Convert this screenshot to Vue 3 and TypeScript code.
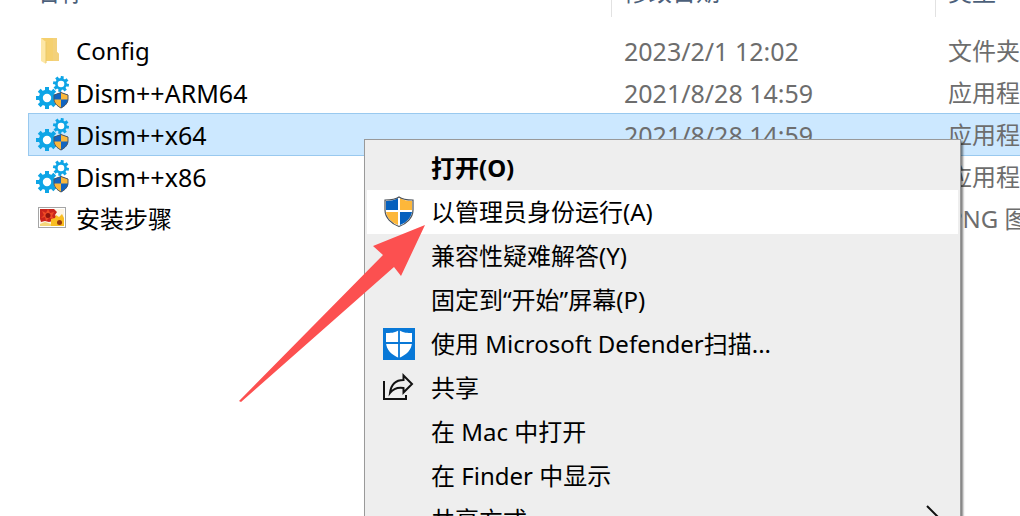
<script setup lang="ts">
type IconKind = 'folder' | 'gears' | 'image'
interface FileRow {
  name: string
  date: string
  type: string
  icon: IconKind
  selected?: boolean
}
interface MenuEntry {
  label: string
  icon?: 'uac' | 'defender' | 'share'
  bold?: boolean
  active?: boolean
  submenu?: boolean
}

const files: FileRow[] = [
  { name: 'Config', date: '2023/2/1 12:02', type: '文件夹', icon: 'folder' },
  { name: 'Dism++ARM64', date: '2021/8/28 14:59', type: '应用程序', icon: 'gears' },
  { name: 'Dism++x64', date: '2021/8/28 14:59', type: '应用程序', icon: 'gears', selected: true },
  { name: 'Dism++x86', date: '2021/8/28 14:59', type: '应用程序', icon: 'gears' },
  { name: '安装步骤', date: '', type: 'PNG 图片文件', icon: 'image' },
]

const menu: MenuEntry[] = [
  { label: '打开(O)', bold: true },
  { label: '以管理员身份运行(A)', icon: 'uac', active: true },
  { label: '兼容性疑难解答(Y)' },
  { label: '固定到“开始”屏幕(P)' },
  { label: '使用 Microsoft Defender扫描...', icon: 'defender' },
  { label: '共享', icon: 'share' },
  { label: '在 Mac 中打开' },
  { label: '在 Finder 中显示' },
  { label: '共享方式', submenu: true },
]

const teeth: number[] = [0, 45, 90, 135, 180, 225, 270, 315]
</script>

<template>
  <main class="explorer">
    <table class="files">
      <colgroup>
        <col class="col-name" />
        <col class="col-date" />
        <col />
      </colgroup>
      <thead>
        <tr>
          <th scope="col"><div class="head first">名称</div></th>
          <th scope="col"><div class="head">修改日期</div></th>
          <th scope="col"><div class="head">类型</div></th>
        </tr>
      </thead>
      <tbody>
        <tr v-for="file in files" :key="file.name" :class="{ selected: file.selected }">
          <td>
            <div class="name" :class="{ program: file.icon === 'gears' }">
              <svg v-if="file.icon === 'folder'" class="icon" viewBox="0 0 34 34" aria-hidden="true">
                <path d="M6 4H22V18L24 20V27H10Z" fill="#f5d06e" />
                <path d="M18 4H22V18L24 20V27H18Z" fill="#f3d17b" />
                <path d="M6 4L11 8V30L6 27Z" fill="#fde7a6" />
                <path d="M11 8V29" stroke="#e9c869" stroke-width="1" />
              </svg>
              <svg v-else-if="file.icon === 'gears'" class="icon" viewBox="-1 0 34 34" aria-hidden="true">
                <g fill="#0ea5e6">
                  <g transform="translate(25 8)">
                    <rect v-for="a in teeth" :key="a" x="-1.5" y="-8" width="3" height="5" :transform="`rotate(${a + 10})`" />
                  </g>
                  <g transform="translate(11 22)">
                    <rect v-for="a in teeth" :key="a" x="-2" y="-11" width="4" height="6" :transform="`rotate(${a})`" />
                  </g>
                </g>
                <circle cx="25" cy="8" r="4.6" fill="#fff" stroke="#0ea5e6" stroke-width="2.6" />
                <circle cx="11" cy="22" r="6.2" fill="#fff" stroke="#0ea5e6" stroke-width="4" />
                <path d="M25 16.500L32 19V23C32 27 29 30 25 32C21 30 18 27 18 23V19Z" fill="#1264c0" />
                <path d="M25 16.500V23.500H18V19ZM25 23.500H32C32 27 29 30 25 32Z" fill="#1264c0" />
                <path d="M25 16.500L32 19V23.500H25ZM18 23.500H25V32C21 30 18 27 18 23.500Z" fill="#fbb83a" />
                <path d="M25 16.500L32 19V23C32 27 29 30 25 32C21 30 18 27 18 23V19Z" fill="none" stroke="#4d5663" stroke-width="1" />
              </svg>
              <svg v-else class="icon" viewBox="0 0 34 34" aria-hidden="true">
                <rect x="3.500" y="5.500" width="27" height="20" fill="#fff" stroke="#a5a5a5" />
                <rect x="5" y="7" width="24" height="17" fill="#fdf4e2" />
                <path d="M5 7H19L22 10L20 13L22 16L18 19L14 20L10 19L6 20L5 17Z" fill="#c9241c" />
                <path d="M7 9L11 11L13 7L15 11L19 10L17 14L19 17L14 16L11 19L10 15L6 16L9 13Z" fill="#ef4b25" />
                <circle cx="13" cy="13.500" r="2.500" fill="#8f160e" />
                <path d="M16 17L20 16L21 13L24 15L27 12L29 16V24H16Z" fill="#f9bd21" />
                <path d="M5 22L10 20L16 22V24H5Z" fill="#f4d779" />
                <circle cx="24.500" cy="20.500" r="2.500" fill="#98390e" />
              </svg>
              <span>{{ file.name }}</span>
            </div>
          </td>
          <td class="meta date">{{ file.date }}</td>
          <td class="meta">{{ file.type }}</td>
        </tr>
      </tbody>
    </table>

    <div class="menu" role="menu">
      <button
        v-for="entry in menu"
        :key="entry.label"
        type="button"
        role="menuitem"
        class="entry"
        :class="{ bold: entry.bold, active: entry.active }"
      >
        <span class="slot">
          <svg v-if="entry.icon === 'uac'" class="glyph" viewBox="0 0 32 32" aria-hidden="true">
            <path d="M16 1C20 4 25 4 30 4V14C30 22 23 28 16 31C9 28 2 22 2 14V4C7 4 12 4 16 1Z" fill="#fff" />
            <path d="M15 2V14H3V5C8 5 12 4 15 2ZM17 16H29C28 22 23 27 17 29Z" fill="#0560bd" />
            <path d="M17 2V14H29V5C24 5 20 4 17 2ZM15 16H3C4 22 9 27 15 29Z" fill="#fdb73a" />
            <path d="M16 1C20 4 25 4 30 4V14C30 22 23 28 16 30.500C9 28 2 22 2 14V4C7 4 12 4 16 1Z" fill="none" stroke="#4b5158" stroke-width="1.200" />
          </svg>
          <svg v-else-if="entry.icon === 'defender'" class="glyph" viewBox="0 0 32 32" aria-hidden="true">
            <rect width="32" height="32" fill="#0878d7" />
            <path d="M16 2C20 5 25 5 29 5V14C29 22 23 27 16 30C9 27 3 22 3 14V5C7 5 12 5 16 2Z" fill="#fff" />
            <path d="M16 1V31M2 15H30" stroke="#0878d7" stroke-width="1.800" />
          </svg>
          <svg v-else-if="entry.icon === 'share'" class="glyph" viewBox="0 0 32 32" aria-hidden="true">
            <g fill="none" stroke="#111" stroke-width="2">
              <path d="M1 9V27H23V23" />
              <path d="M20.500 3.500L29 12L20.500 20.500V16C14 15 10 17 7 21C8 13 12 8 20.500 8Z" />
            </g>
          </svg>
        </span>
        <span class="label">{{ entry.label }}</span>
        <svg v-if="entry.submenu" class="chevron" viewBox="0 0 16 30" aria-hidden="true">
          <path d="M1 1L15 15L1 29" fill="none" stroke="#111" stroke-width="2" />
        </svg>
      </button>
    </div>

    <svg class="pointer" viewBox="0 0 188 180" aria-hidden="true">
      <path d="M186 0L134 21L144 30L0 176L2 177L155 42L162 51Z" fill="#fc5050" />
    </svg>
  </main>
</template>

<style>
body {
  margin: 0;
  background: #fff;
}
</style>

<style scoped>
.explorer {
  position: relative;
  height: 100vh;
  overflow: hidden;
  font-family: "Noto Sans", "Noto Sans CJK SC", sans-serif;
  font-size: 24px;
  line-height: 32px;
  color: #000;
}
.files {
  width: calc(100% - 28px);
  margin: -31px 0 0 28px;
  table-layout: fixed;
  border-collapse: collapse;
  white-space: nowrap;
}
.col-name {
  width: 583px;
}
.col-date {
  width: 324px;
}
th {
  height: 61px;
  padding: 0;
  vertical-align: top;
  text-align: left;
  font-weight: 400;
  color: #4c607a;
}
.head {
  box-sizing: border-box;
  height: 48px;
  padding: 7px 12px;
  border-left: 1px solid #e2e2e2;
}
.head.first {
  padding-left: 7px;
  border-left-color: transparent;
}
td {
  height: 42px;
  padding: 0;
}
.name {
  display: flex;
  align-items: center;
  gap: 7px;
  padding-left: 7px;
}
.icon {
  width: 34px;
  height: 34px;
  flex: none;
}
.meta {
  padding-left: 13px;
  color: #6d6d6d;
}
.date,
.program {
  font-size: 25px;
}
.selected td {
  background: #cce8ff;
  box-shadow: 0 -1px #99c9ef, inset 0 -1px #99c9ef;
}
.selected td:first-child {
  box-shadow: 0 -1px #99c9ef, inset 0 -1px #99c9ef, inset 1px 0 #99c9ef;
}
.menu {
  position: absolute;
  top: 139px;
  left: 364px;
  right: 59px;
  box-sizing: border-box;
  padding: 6px 2px;
  border: 1px solid #999;
  background: #eee;
  box-shadow: 2px 2px 2px rgba(0, 0, 0, 0.5);
}
.entry {
  display: flex;
  align-items: center;
  width: 100%;
  height: 44px;
  padding: 0 16px;
  border: 0;
  background: transparent;
  font: inherit;
  color: #000;
  text-align: left;
  white-space: nowrap;
}
.entry.bold {
  font-weight: 700;
}
.entry.active {
  background: #fff;
}
.slot {
  display: flex;
  width: 48px;
  flex: none;
}
.glyph {
  width: 32px;
  height: 32px;
}
.label {
  flex: 1;
}
.chevron {
  width: 16px;
  height: 30px;
}
.pointer {
  position: absolute;
  top: 225px;
  left: 239px;
  width: 188px;
  height: 180px;
}
</style>
